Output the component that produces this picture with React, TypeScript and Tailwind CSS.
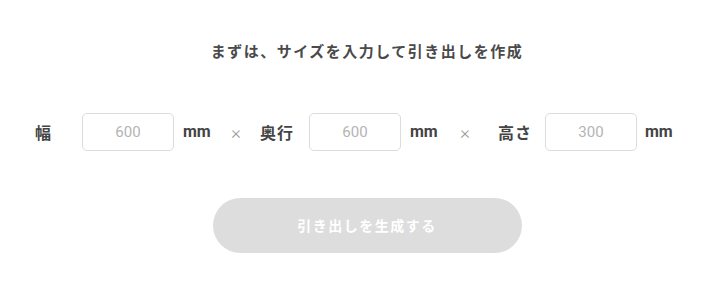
import React from "react";

const inputCls =
  "w-[92px] h-[38px] rounded-[5px] border border-[#dcdcdc] bg-white text-center text-[15px] text-[#444] placeholder:text-[#b4b4b4] outline-none font-['Roboto','Noto_Sans_CJK_JP',sans-serif]";

export default function App() {
  return (
    <div className="w-[712px] h-[288px] bg-white font-['Roboto','Noto_Sans_CJK_JP',sans-serif] text-[#444]">
      <div className="ml-[22px] w-[690px] flex flex-col items-center">
        <div className="mt-[40px] h-[22px] leading-[22px] text-[15px] font-bold tracking-[1.5px] text-[#4a4a4a] font-['Noto_Sans_CJK_JP',sans-serif]">
          まずは、サイズを入力して引き出しを作成
        </div>
      </div>

      <div className="mt-[51px] h-[38px] flex items-center pl-[35px]">
        <span className="w-[47px] text-[16px] font-bold text-[#444] font-['Noto_Sans_CJK_JP',sans-serif]">幅</span>
        <input className={inputCls} placeholder="600" />
        <span className="ml-[9px] w-[30px] text-[16px] font-bold text-[#444]">mm</span>
        <span className="ml-[18px] w-[13px] text-[19px] font-light text-[#999] leading-none">×</span>
        <span className="ml-[16px] w-[49px] text-[16px] font-bold tracking-[1px] text-[#444] font-['Noto_Sans_CJK_JP',sans-serif]">奥行</span>
        <input className={inputCls} placeholder="600" />
        <span className="ml-[9px] w-[30px] text-[16px] font-bold text-[#444]">mm</span>
        <span className="ml-[20px] w-[13px] text-[19px] font-light text-[#999] leading-none">×</span>
        <span className="ml-[25px] w-[47px] text-[16px] font-bold tracking-[1px] text-[#444] font-['Noto_Sans_CJK_JP',sans-serif]">高さ</span>
        <input className={inputCls} placeholder="300" />
        <span className="ml-[8px] w-[30px] text-[16px] font-bold text-[#444]">mm</span>
      </div>

      <div className="ml-[22px] w-[690px] flex flex-col items-center">
        <button className="mt-[47px] w-[309px] h-[55px] rounded-full bg-[#dddddd] text-white text-[14px] font-bold tracking-[1.5px] font-['Noto_Sans_CJK_JP',sans-serif]">
          引き出しを生成する
        </button>
      </div>
    </div>
  );
}
